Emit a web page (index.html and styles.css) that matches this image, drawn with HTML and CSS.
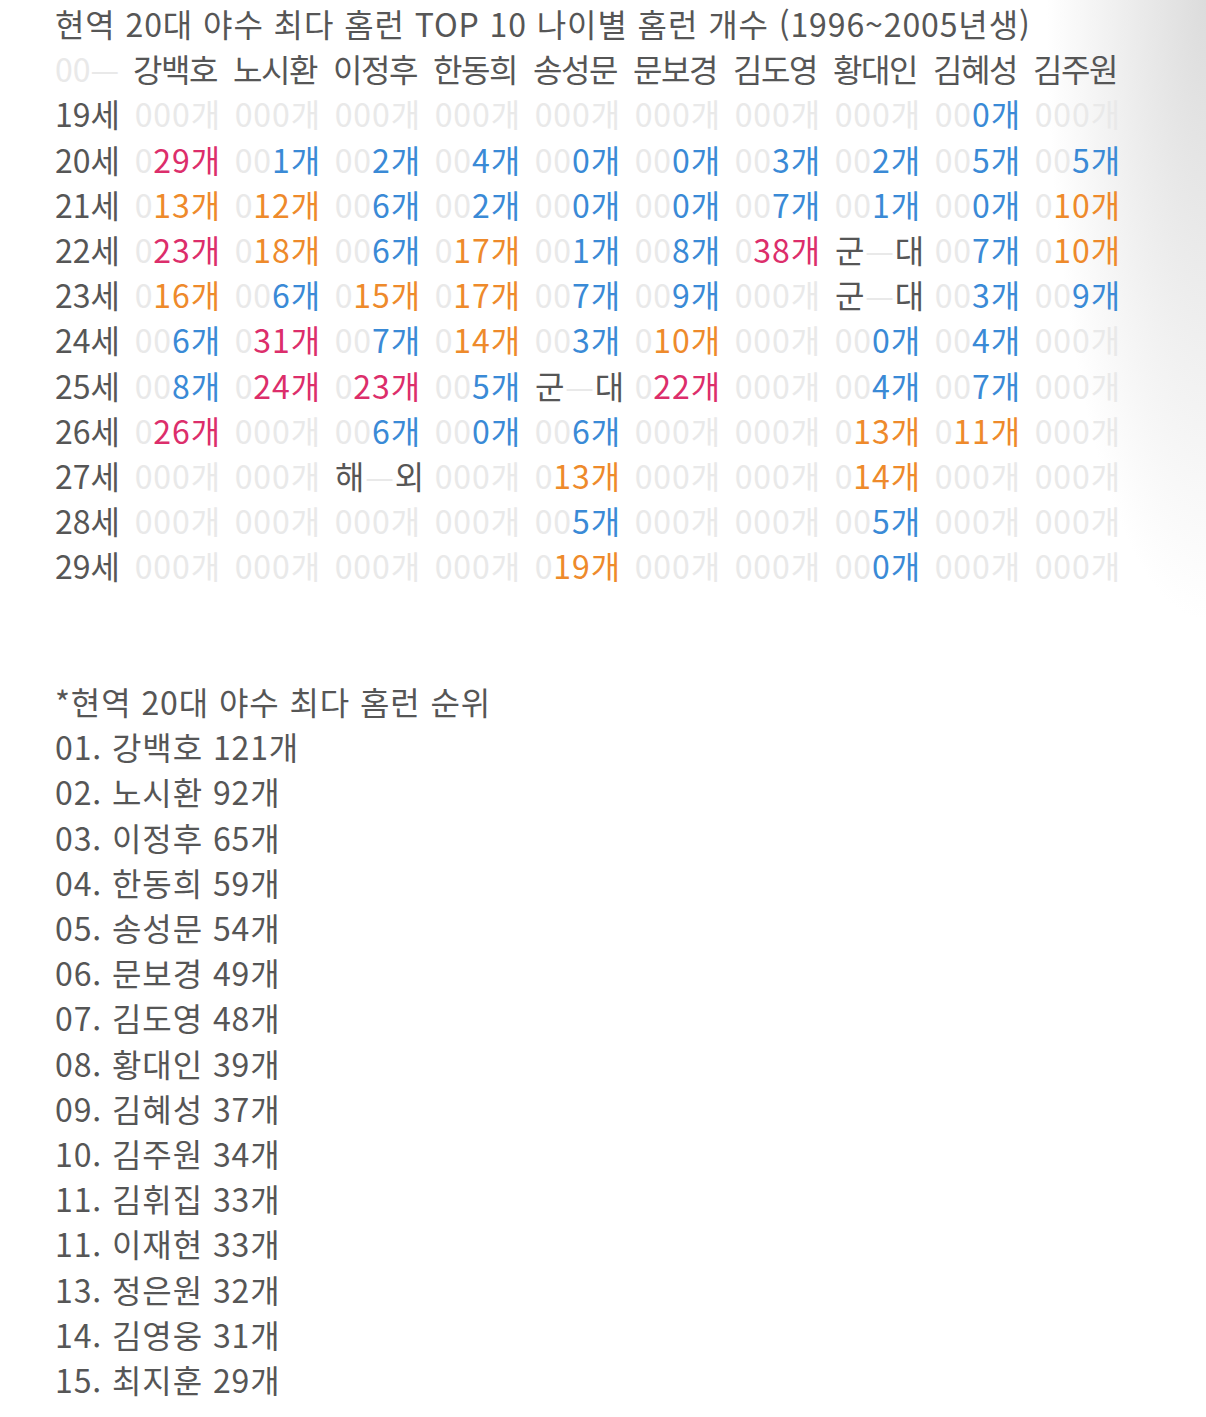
FILE: index.html
```html
<!DOCTYPE html>
<html lang="ko">
<head>
<meta charset="utf-8">
<title>현역 20대 야수 최다 홈런</title>
<link rel="stylesheet" href="styles.css">
</head>
<body>
<main class="post">
  <p class="line">현역 20대 야수 최다 홈런 TOP 10 나이별 홈런 개수 (1996~2005년생)</p>
  <div class="table">
    <div class="row head">
      <span class="lbl f">00—</span>
      <span class="c">강백호</span><span class="c">노시환</span><span class="c">이정후</span><span class="c">한동희</span><span class="c">송성문</span><span class="c">문보경</span><span class="c">김도영</span><span class="c">황대인</span><span class="c">김혜성</span><span class="c">김주원</span>
    </div>
    <div class="row">
      <span class="lbl">19세</span>
      <span class="c f">000개</span><span class="c f">000개</span><span class="c f">000개</span><span class="c f">000개</span><span class="c f">000개</span><span class="c f">000개</span><span class="c f">000개</span><span class="c f">000개</span><span class="c"><i class="f">00</i><b class="bl">0개</b></span><span class="c f">000개</span>
    </div>
    <div class="row">
      <span class="lbl">20세</span>
      <span class="c"><i class="f">0</i><b class="pk">29개</b></span><span class="c"><i class="f">00</i><b class="bl">1개</b></span><span class="c"><i class="f">00</i><b class="bl">2개</b></span><span class="c"><i class="f">00</i><b class="bl">4개</b></span><span class="c"><i class="f">00</i><b class="bl">0개</b></span><span class="c"><i class="f">00</i><b class="bl">0개</b></span><span class="c"><i class="f">00</i><b class="bl">3개</b></span><span class="c"><i class="f">00</i><b class="bl">2개</b></span><span class="c"><i class="f">00</i><b class="bl">5개</b></span><span class="c"><i class="f">00</i><b class="bl">5개</b></span>
    </div>
    <div class="row">
      <span class="lbl">21세</span>
      <span class="c"><i class="f">0</i><b class="or">13개</b></span><span class="c"><i class="f">0</i><b class="or">12개</b></span><span class="c"><i class="f">00</i><b class="bl">6개</b></span><span class="c"><i class="f">00</i><b class="bl">2개</b></span><span class="c"><i class="f">00</i><b class="bl">0개</b></span><span class="c"><i class="f">00</i><b class="bl">0개</b></span><span class="c"><i class="f">00</i><b class="bl">7개</b></span><span class="c"><i class="f">00</i><b class="bl">1개</b></span><span class="c"><i class="f">00</i><b class="bl">0개</b></span><span class="c"><i class="f">0</i><b class="or">10개</b></span>
    </div>
    <div class="row">
      <span class="lbl">22세</span>
      <span class="c"><i class="f">0</i><b class="pk">23개</b></span><span class="c"><i class="f">0</i><b class="or">18개</b></span><span class="c"><i class="f">00</i><b class="bl">6개</b></span><span class="c"><i class="f">0</i><b class="or">17개</b></span><span class="c"><i class="f">00</i><b class="bl">1개</b></span><span class="c"><i class="f">00</i><b class="bl">8개</b></span><span class="c"><i class="f">0</i><b class="pk">38개</b></span><span class="c gap"><b>군</b><i class="f">—</i><b>대</b></span><span class="c"><i class="f">00</i><b class="bl">7개</b></span><span class="c"><i class="f">0</i><b class="or">10개</b></span>
    </div>
    <div class="row">
      <span class="lbl">23세</span>
      <span class="c"><i class="f">0</i><b class="or">16개</b></span><span class="c"><i class="f">00</i><b class="bl">6개</b></span><span class="c"><i class="f">0</i><b class="or">15개</b></span><span class="c"><i class="f">0</i><b class="or">17개</b></span><span class="c"><i class="f">00</i><b class="bl">7개</b></span><span class="c"><i class="f">00</i><b class="bl">9개</b></span><span class="c f">000개</span><span class="c gap"><b>군</b><i class="f">—</i><b>대</b></span><span class="c"><i class="f">00</i><b class="bl">3개</b></span><span class="c"><i class="f">00</i><b class="bl">9개</b></span>
    </div>
    <div class="row">
      <span class="lbl">24세</span>
      <span class="c"><i class="f">00</i><b class="bl">6개</b></span><span class="c"><i class="f">0</i><b class="pk">31개</b></span><span class="c"><i class="f">00</i><b class="bl">7개</b></span><span class="c"><i class="f">0</i><b class="or">14개</b></span><span class="c"><i class="f">00</i><b class="bl">3개</b></span><span class="c"><i class="f">0</i><b class="or">10개</b></span><span class="c f">000개</span><span class="c"><i class="f">00</i><b class="bl">0개</b></span><span class="c"><i class="f">00</i><b class="bl">4개</b></span><span class="c f">000개</span>
    </div>
    <div class="row">
      <span class="lbl">25세</span>
      <span class="c"><i class="f">00</i><b class="bl">8개</b></span><span class="c"><i class="f">0</i><b class="pk">24개</b></span><span class="c"><i class="f">0</i><b class="pk">23개</b></span><span class="c"><i class="f">00</i><b class="bl">5개</b></span><span class="c gap"><b>군</b><i class="f">—</i><b>대</b></span><span class="c"><i class="f">0</i><b class="pk">22개</b></span><span class="c f">000개</span><span class="c"><i class="f">00</i><b class="bl">4개</b></span><span class="c"><i class="f">00</i><b class="bl">7개</b></span><span class="c f">000개</span>
    </div>
    <div class="row">
      <span class="lbl">26세</span>
      <span class="c"><i class="f">0</i><b class="pk">26개</b></span><span class="c f">000개</span><span class="c"><i class="f">00</i><b class="bl">6개</b></span><span class="c"><i class="f">00</i><b class="bl">0개</b></span><span class="c"><i class="f">00</i><b class="bl">6개</b></span><span class="c f">000개</span><span class="c f">000개</span><span class="c"><i class="f">0</i><b class="or">13개</b></span><span class="c"><i class="f">0</i><b class="or">11개</b></span><span class="c f">000개</span>
    </div>
    <div class="row">
      <span class="lbl">27세</span>
      <span class="c f">000개</span><span class="c f">000개</span><span class="c gap"><b>해</b><i class="f">—</i><b>외</b></span><span class="c f">000개</span><span class="c"><i class="f">0</i><b class="or">13개</b></span><span class="c f">000개</span><span class="c f">000개</span><span class="c"><i class="f">0</i><b class="or">14개</b></span><span class="c f">000개</span><span class="c f">000개</span>
    </div>
    <div class="row">
      <span class="lbl">28세</span>
      <span class="c f">000개</span><span class="c f">000개</span><span class="c f">000개</span><span class="c f">000개</span><span class="c"><i class="f">00</i><b class="bl">5개</b></span><span class="c f">000개</span><span class="c f">000개</span><span class="c"><i class="f">00</i><b class="bl">5개</b></span><span class="c f">000개</span><span class="c f">000개</span>
    </div>
    <div class="row">
      <span class="lbl">29세</span>
      <span class="c f">000개</span><span class="c f">000개</span><span class="c f">000개</span><span class="c f">000개</span><span class="c"><i class="f">0</i><b class="or">19개</b></span><span class="c f">000개</span><span class="c f">000개</span><span class="c"><i class="f">00</i><b class="bl">0개</b></span><span class="c f">000개</span><span class="c f">000개</span>
    </div>
  </div>

  <section class="rank">
    <p class="line">*현역 20대 야수 최다 홈런 순위</p>
    <p class="line">01. 강백호 121개</p>
    <p class="line">02. 노시환 92개</p>
    <p class="line">03. 이정후 65개</p>
    <p class="line">04. 한동희 59개</p>
    <p class="line">05. 송성문 54개</p>
    <p class="line">06. 문보경 49개</p>
    <p class="line">07. 김도영 48개</p>
    <p class="line">08. 황대인 39개</p>
    <p class="line">09. 김혜성 37개</p>
    <p class="line">10. 김주원 34개</p>
    <p class="line">11. 김휘집 33개</p>
    <p class="line">11. 이재현 33개</p>
    <p class="line">13. 정은원 32개</p>
    <p class="line">14. 김영웅 31개</p>
    <p class="line">15. 최지훈 29개</p>
  </section>
</main>
</body>
</html>
```

FILE: styles.css
```css
html {
  background:
    radial-gradient(ellipse 160px 620px at 100% 0%, rgba(205,205,205,0.7) 0%, rgba(255,255,255,0) 100%),
    #ffffff;
  min-height: 100%;
}
body {
  margin: 0;
  font-family: "Noto Sans CJK KR", "Noto Sans", sans-serif;
  font-size: 32px;
  letter-spacing: 0.9px;
  line-height: 45.2px;
  color: #565656;
}
.post {
  padding: 1px 0 0 55px;
}
.line {
  margin: 0;
  white-space: nowrap;
}
.table {
  display: flex;
  flex-direction: column;
}
.row {
  display: grid;
  grid-template-columns: 66px repeat(10, 88px);
  column-gap: 12px;
  white-space: nowrap;
}
.lbl {
  text-align: left;
  letter-spacing: 0;
}
.c {
  text-align: right;
}
.head .c {
  text-align: left;
  letter-spacing: -1.5px;
}
.c i, .c b {
  font-style: normal;
  font-weight: 400;
}
.c.gap {
  display: flex;
  justify-content: space-between;
  padding-left: 2px;
}
.f { color: #e9e9e9; }
.pk { color: #dc2e6b; }
.or { color: #ee8a2b; }
.bl { color: #3a8ad6; }
.rank {
  margin-top: 90.4px;
}
```
